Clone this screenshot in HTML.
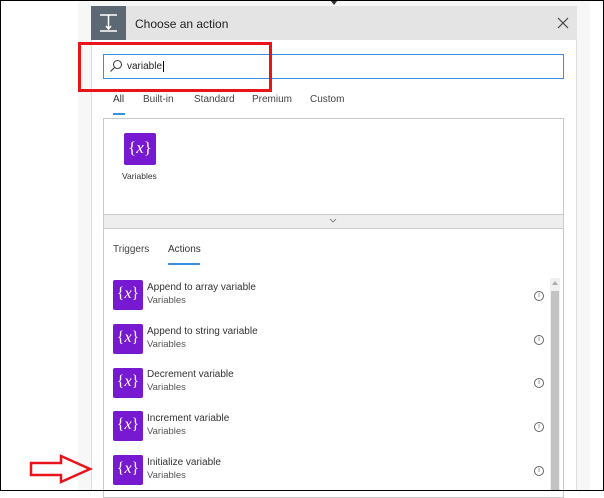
<!DOCTYPE html>
<html><head><style>
*{margin:0;padding:0;box-sizing:border-box}
body{width:604px;height:491px;position:relative;overflow:hidden;background:#fff;font-family:"Liberation Sans",sans-serif;color:#333}
.a{position:absolute}
.ic{position:absolute;background:#7719d0;border-radius:2px;color:#fff;font-family:"Liberation Serif",serif;text-align:center}
.ic i{font-style:italic}
.t{font-size:10px;color:#333}
.s{font-size:9.5px;color:#555}
.info{position:absolute;width:10px;height:10px;border:1px solid #666;border-radius:50%;font-size:7px;line-height:8px;text-align:center;color:#666}
</style></head><body>
<div class="a" style="left:0;top:0;width:604px;height:491px;border:1px solid #000;z-index:10;pointer-events:none"></div>
<div class="a" style="left:78px;top:0;width:512px;height:491px;background:#f7f7f7"></div>
<div class="a" style="left:91px;top:6px;width:486px;height:485px;background:#fff;border:1px solid #ddd"></div>
<div class="a" style="left:91px;top:6px;width:486px;height:34px;background:#e4e4e4"></div>
<div class="a" style="left:91px;top:6px;width:35px;height:34px;background:#5c6975"></div>
<svg class="a" style="left:91px;top:6px" width="35" height="34"><g stroke="#fff" stroke-width="1.5" fill="none"><path d="M9 9h17M17.5 9v14M9 25h17"/><path d="M15 20l2.5 3 2.5-3"/></g></svg>
<div class="a" style="left:330px;top:0;width:0;height:0;border-left:4px solid transparent;border-right:4px solid transparent;border-top:5px solid #333"></div>
<div class="a" style="left:135px;top:17px;font-size:12px;color:#222">Choose an action</div>
<svg class="a" style="left:557px;top:17px" width="12" height="12"><path d="M1 1l10 10M11 1L1 11" stroke="#444" stroke-width="1.2"/></svg>
<div class="a" style="left:103px;top:54px;width:461px;height:25px;border:1px solid #3b8fe0"></div>
<svg class="a" style="left:109px;top:59px" width="14" height="14"><circle cx="8.5" cy="5.5" r="4" stroke="#444" fill="none" stroke-width="1.1"/><path d="M5.5 8.5L1.5 12.5" stroke="#444" stroke-width="1.2"/></svg>
<div class="a" style="left:127px;top:61px;font-size:10px;color:#222">variable<span style="border-left:1px solid #000;margin-left:1px"></span></div>
<div class="a" style="left:78px;top:42px;width:194px;height:50px;border:3px solid #e8131b"></div>
<div class="a" style="left:113px;top:94px;font-size:10px;color:#333">All</div>
<div class="a" style="left:143px;top:94px;font-size:10px;color:#444">Built-in</div>
<div class="a" style="left:194px;top:94px;font-size:10px;color:#444">Standard</div>
<div class="a" style="left:252px;top:94px;font-size:10px;color:#444">Premium</div>
<div class="a" style="left:310px;top:94px;font-size:10px;color:#444">Custom</div>
<div class="a" style="left:113px;top:113px;width:12px;height:2px;background:#3b8fe0"></div>
<div class="a" style="left:103px;top:118px;width:461px;height:97px;border:1px solid #c8c8c8"></div>
<div class="ic" style="left:124px;top:133px;width:32px;height:32px;font-size:17px;line-height:30px">{<i>x</i>}</div>
<div class="a" style="left:122px;top:171px;font-size:8.5px;color:#333">Variables</div>
<div class="a" style="left:103px;top:214px;width:461px;height:15px;background:#eee;border:1px solid #ccc"></div>
<svg class="a" style="left:329px;top:218px" width="8" height="6"><path d="M1 1l3 3 3-3" stroke="#888" fill="none"/></svg>
<div class="a" style="left:103px;top:228px;width:461px;height:270px;border:1px solid #c8c8c8;border-top:none"></div>
<div class="a" style="left:113px;top:244px;font-size:10px;color:#444">Triggers</div>
<div class="a" style="left:168px;top:244px;font-size:10px;color:#333">Actions</div>
<div class="a" style="left:168px;top:263px;width:32px;height:2px;background:#3b8fe0"></div>
<div class="a" style="left:550px;top:278px;width:10px;height:213px;background:#f0f0f0"></div>
<div class="a" style="left:551px;top:291px;width:8px;height:200px;background:#c3c3c3"></div>
<div class="a" style="left:552px;top:281px;width:0;height:0;border-left:3px solid transparent;border-right:3px solid transparent;border-bottom:4px solid #aaa"></div>

<div class="ic" style="left:113px;top:280px;width:30px;height:30px;font-size:16px;line-height:28px">{<i>x</i>}</div>
<div class="a t" style="left:147px;top:282px">Append to array variable</div><div class="a s" style="left:147px;top:295px">Variables</div><div class="info" style="left:534px;top:291px">i</div>
<div class="ic" style="left:113px;top:324px;width:30px;height:30px;font-size:16px;line-height:28px">{<i>x</i>}</div>
<div class="a t" style="left:147px;top:326px">Append to string variable</div><div class="a s" style="left:147px;top:339px">Variables</div><div class="info" style="left:534px;top:335px">i</div>
<div class="ic" style="left:113px;top:368px;width:30px;height:30px;font-size:16px;line-height:28px">{<i>x</i>}</div>
<div class="a t" style="left:147px;top:369px">Decrement variable</div><div class="a s" style="left:147px;top:382px">Variables</div><div class="info" style="left:534px;top:378px">i</div>
<div class="ic" style="left:113px;top:411px;width:30px;height:30px;font-size:16px;line-height:28px">{<i>x</i>}</div>
<div class="a t" style="left:147px;top:413px">Increment variable</div><div class="a s" style="left:147px;top:426px">Variables</div><div class="info" style="left:534px;top:422px">i</div>
<div class="ic" style="left:113px;top:455px;width:30px;height:30px;font-size:16px;line-height:28px">{<i>x</i>}</div>
<div class="a t" style="left:147px;top:457px">Initialize variable</div><div class="a s" style="left:147px;top:470px">Variables</div><div class="info" style="left:534px;top:466px">i</div>

<svg class="a" style="left:28px;top:453px" width="68" height="32"><path d="M3 10h30V3l29 13-29 13v-7H3z" fill="none" stroke="#e8131b" stroke-width="2.5"/></svg>
</body></html>
